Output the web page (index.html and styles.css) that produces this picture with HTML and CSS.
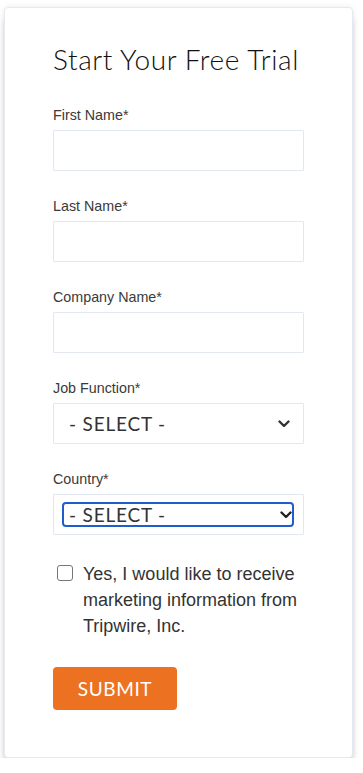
FILE: index.html
```html
<!DOCTYPE html>
<html lang="en">
<head>
<meta charset="utf-8">
<title>Start Your Free Trial</title>
<link rel="stylesheet" href="styles.css">
</head>
<body>
<div class="page">
  <form class="card">
    <h1 class="title">Start Your Free Trial</h1>

    <div class="field">
      <label class="label" for="fn">First Name*</label>
      <input class="input" id="fn" type="text">
    </div>

    <div class="field">
      <label class="label" for="ln">Last Name*</label>
      <input class="input" id="ln" type="text">
    </div>

    <div class="field">
      <label class="label" for="cn">Company Name*</label>
      <input class="input" id="cn" type="text">
    </div>

    <div class="field">
      <label class="label" for="jf">Job Function*</label>
      <div class="select-wrap">
        <select class="select" id="jf"><option>- SELECT -</option></select>
        <svg class="chev" width="12" height="8" viewBox="0 0 12 8"><path d="M1.5 1.5 L6 6 L10.5 1.5" fill="none" stroke="#333" stroke-width="2.4" stroke-linecap="round" stroke-linejoin="round"/></svg>
      </div>
    </div>

    <div class="field">
      <label class="label" for="co">Country*</label>
      <div class="select-box">
        <div class="select-focus">
          <select class="select-inner" id="co"><option>- SELECT -</option></select>
          <svg class="chev2" width="12" height="8" viewBox="0 0 12 8"><path d="M1.5 1.5 L6 6 L10.5 1.5" fill="none" stroke="#222" stroke-width="2.4" stroke-linecap="round" stroke-linejoin="round"/></svg>
        </div>
      </div>
    </div>

    <label class="optin">
      <span class="box"></span>
      <span class="optin-text">Yes, I would like to receive marketing information from Tripwire, Inc.</span>
    </label>

    <button type="button" class="submit">SUBMIT</button>
  </form>
</div>
</body>
</html>
```

FILE: styles.css
```css
html, body {
  margin: 0;
  padding: 0;
  background: #ffffff;
}

.page {
  padding: 7px 0 0 4px;
}

.card {
  box-sizing: border-box;
  width: 349px;
  height: 751px;
  background: #fff;
  border: 1px solid #e6eaf0;
  border-radius: 4px;
  box-shadow: 0 9px 8px -3px rgba(0,0,0,0.32), 0 0 6px rgba(0,0,0,0.08);
  padding: 34px 0 0 48px;
  display: flex;
  flex-direction: column;
  align-items: flex-start;
}

.title {
  margin: 0 0 30px 0;
  font-family: "Lato", "Noto Sans", sans-serif;
  font-weight: 300;
  font-size: 28px;
  line-height: 34px;
  color: #111;
  letter-spacing: 0.6px;
}

.field {
  display: flex;
  flex-direction: column;
  margin-bottom: 26px;
}

.label {
  font-family: "Liberation Sans", Arial, sans-serif;
  font-size: 14.3px;
  line-height: 18px;
  color: #3a3a3a;
  margin-bottom: 6px;
}

.input {
  box-sizing: border-box;
  width: 251px;
  height: 41px;
  border: 1px solid #e3e8f0;
  border-radius: 1px;
  background: #fff;
  margin: 0;
  padding: 0 10px;
  outline: none;
}

.select-wrap {
  position: relative;
  width: 251px;
  height: 41px;
}

.select {
  box-sizing: border-box;
  -webkit-appearance: none;
  appearance: none;
  width: 251px;
  height: 41px;
  border: 1px solid #e3e8f0;
  border-radius: 1px;
  background: #fff;
  margin: 0;
  padding: 0 0 0 15px;
  font-family: "Lato", "Noto Sans", sans-serif;
  font-size: 19px;
  color: #333;
  letter-spacing: 0.8px;
  outline: none;
}

.chev {
  position: absolute;
  left: 225px;
  top: 17px;
}

.select-box {
  box-sizing: border-box;
  width: 251px;
  height: 41px;
  border: 1px solid #e3e8f0;
  border-radius: 1px;
  padding: 7px 9px 0 8px;
}

.select-focus {
  position: relative;
  height: 25px;
}

.select-inner {
  box-sizing: border-box;
  -webkit-appearance: none;
  appearance: none;
  width: 232px;
  height: 25px;
  border: 2px solid #1f5ccc;
  border-radius: 4px;
  background: #fff;
  margin: 0;
  padding: 0 0 0 5px;
  font-family: "Lato", "Noto Sans", sans-serif;
  font-size: 19px;
  line-height: 21px;
  color: #333;
  letter-spacing: 0.8px;
  outline: none;
}

.chev2 {
  position: absolute;
  left: 218px;
  top: 9px;
}

.optin {
  display: flex;
  align-items: flex-start;
  gap: 10px;
  margin: 0 0 28px 4px;
  width: 250px;
}

.box {
  flex: none;
  box-sizing: border-box;
  width: 16px;
  height: 16px;
  border: 1.5px solid #767676;
  border-radius: 3px;
  margin-top: 4px;
  background: #fff;
}

.optin-text {
  font-family: "Liberation Sans", Arial, sans-serif;
  font-size: 18px;
  line-height: 26px;
  color: #333;
}

.submit {
  box-sizing: border-box;
  width: 124px;
  height: 43px;
  border: none;
  border-radius: 4px;
  background: #ec7222;
  color: #fff;
  font-family: "Lato", "Noto Sans", sans-serif;
  font-size: 19px;
  font-weight: 400;
  letter-spacing: 0.6px;
  padding: 0;
  margin: 0;
}
```
